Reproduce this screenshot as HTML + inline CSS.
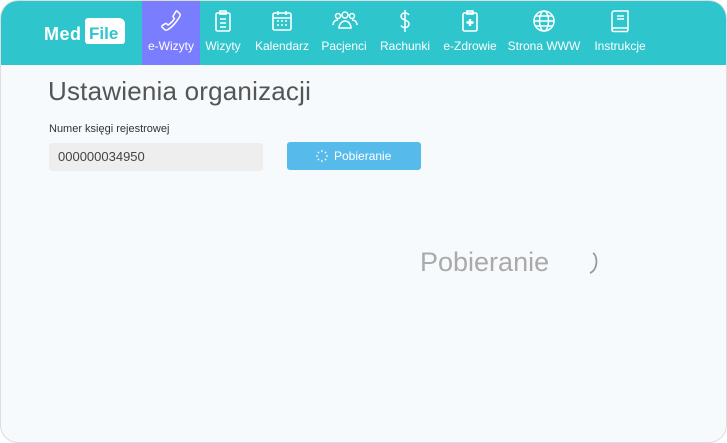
<!DOCTYPE html>
<html><head><meta charset="utf-8"><style>
*{margin:0;padding:0;box-sizing:border-box}
body{width:727px;height:443px;background:#fff;font-family:"Liberation Sans",Arial,sans-serif;overflow:hidden;position:relative}
.card{position:absolute;left:0;top:0;width:727px;height:443px;border:1px solid #ddd;border-radius:18px;background:#f6fafc;overflow:hidden}
.nav{position:absolute;left:0;top:0;width:727px;height:64px;background:#2ec5cc}
.item{position:absolute;top:0;height:64px;color:#fff;font-size:12px;text-align:center;transform:translateX(-50%);white-space:nowrap}
.item .lbl{position:absolute;top:38px;left:50%;transform:translateX(-50%)}
.item svg{position:absolute;top:8px;left:50%;margin-left:-12px}
.act{position:absolute;left:141px;top:0;width:58px;height:64px;background:#7b7dff}
.abs{position:absolute}
</style></head><body><div class="card">
<div class="nav">
<div class="abs" style="left:43px;top:23px;color:#fff;font-weight:bold;font-size:18px;letter-spacing:0.5px">Med</div>
<div class="abs" style="left:84px;top:17px;width:40px;height:26px;background:#fff;border-radius:3px 6px 3px 3px"></div>
<div class="abs" style="left:88px;top:23px;color:#2ec5cc;font-weight:bold;font-size:17px">File</div>
<div class="act"></div>
<div class="item" style="left:170px;width:58px"><svg width="24" height="24" viewBox="0 0 24 24" fill="none" stroke="#fff" stroke-width="1.5"><path d="M18 2l3 3c1 1-1 4-4 8s-7 7-9 8c-1 .5-2 0-2.5-.5L3 18c-.5-.6 0-1.3.6-1.7l2.6-1.6c.6-.4 1.3-.2 1.8.3l1 1c2-1 5-4 6.5-6.5l-1-1c-.5-.5-.6-1.2-.2-1.8L16 4c.5-.8 1.3-2.5 2-2z"/></svg><span class="lbl">e-Wizyty</span></div>
<div class="item" style="left:222px;width:44px"><svg width="24" height="24" viewBox="0 0 24 24" fill="none" stroke="#fff" stroke-width="1.6"><rect x="5" y="4" width="14" height="18" rx="1.5"/><rect x="9" y="2" width="6" height="3"/><path d="M9 10h6M9 14h6M9 18h6"/></svg><span class="lbl">Wizyty</span></div>
<div class="item" style="left:281px;width:60px"><svg width="24" height="24" viewBox="0 0 24 24" fill="none" stroke="#fff" stroke-width="1.6"><rect x="3" y="4" width="18" height="17" rx="1.5"/><path d="M3 9h18M8 2v4M16 2v4M7 12h2M11 12h2M15 12h2M7 16h2M11 16h2M15 16h2"/></svg><span class="lbl">Kalendarz</span></div>
<div class="item" style="left:343px;width:60px"><svg width="26" height="24" viewBox="0 0 26 24" fill="none" stroke="#fff" stroke-width="1.5"><circle cx="6" cy="7" r="2.5"/><circle cx="13" cy="6" r="3"/><circle cx="20" cy="7" r="2.5"/><path d="M1 16c0-3 2-5 5-5M25 16c0-3-2-5-5-5M7 19c0-4 3-7 6-7s6 3 6 7z"/></svg><span class="lbl">Pacjenci</span></div>
<div class="item" style="left:404px;width:56px"><svg width="24" height="24" viewBox="0 0 24 24" fill="none" stroke="#fff" stroke-width="1.5"><path d="M12 1v22M16 6c-1-1.5-2.5-2-4-2-2.5 0-4 1.5-4 3.3 0 4.5 8 3 8 7.7 0 2-1.7 3.5-4 3.5-1.8 0-3.3-.8-4-2"/></svg><span class="lbl">Rachunki</span></div>
<div class="item" style="left:469px;width:60px"><svg width="24" height="24" viewBox="0 0 24 24" fill="none" stroke="#fff" stroke-width="1.6"><rect x="5" y="4" width="14" height="18" rx="1.5"/><rect x="9" y="2" width="6" height="3"/><path d="M12 10v7M8.5 13.5h7" stroke-width="2.4"/></svg><span class="lbl">e-Zdrowie</span></div>
<div class="item" style="left:543px;width:76px"><svg width="24" height="24" viewBox="0 0 24 24" fill="none" stroke="#fff" stroke-width="1.5"><circle cx="12" cy="12" r="10"/><ellipse cx="12" cy="12" rx="4.5" ry="10"/><path d="M2 12h20M4 7h16M4 17h16"/></svg><span class="lbl">Strona WWW</span></div>
<div class="item" style="left:619px;width:60px"><svg width="24" height="24" viewBox="0 0 24 24" fill="none" stroke="#fff" stroke-width="1.5"><path d="M4 4c0-1 1-2 2-2h14v17H6c-1 0-2 1-2 2s1 1.5 2 1.5h14M4 4v17M20 19v3"/><path d="M9 7h7M9 10h7"/></svg><span class="lbl">Instrukcje</span></div>
</div>
<div class="abs" style="left:47px;top:75px;font-size:26px;color:#555;font-weight:300;letter-spacing:0.2px">Ustawienia organizacji</div>
<div class="abs" style="left:48px;top:122px;font-size:11px;color:#333">Numer księgi rejestrowej</div>
<div class="abs" style="left:48px;top:142px;width:214px;height:28px;background:#eeeeee;border-radius:3px;font-size:13px;color:#444;padding:6px 0 0 9px">000000034950</div>
<div class="abs" style="left:286px;top:141px;width:134px;height:28px;background:#56bbea;border-radius:3px;color:#fff;font-size:12px">
<svg class="abs" style="left:29px;top:8px" width="12" height="12" viewBox="0 0 12 12" fill="#fff"><circle cx="6" cy="1" r="0.9"/><circle cx="9.5" cy="2.5" r="0.9"/><circle cx="11" cy="6" r="0.9"/><circle cx="9.5" cy="9.5" r="0.9"/><circle cx="6" cy="11" r="0.9"/><circle cx="2.5" cy="9.5" r="0.9"/><circle cx="1" cy="6" r="0.9"/><circle cx="2.5" cy="2.5" r="0.9"/></svg>
<span class="abs" style="left:47px;top:7px">Pobieranie</span></div>
<div class="abs" style="left:419px;top:246px;font-size:27px;color:#aaa">Pobieranie</div>
<svg class="abs" style="left:586px;top:250px" width="16" height="24" viewBox="0 0 16 24" fill="none" stroke="#999" stroke-width="1.8"><path d="M6 2c5 3 5 17 -3 20"/></svg>
</div></body></html>
